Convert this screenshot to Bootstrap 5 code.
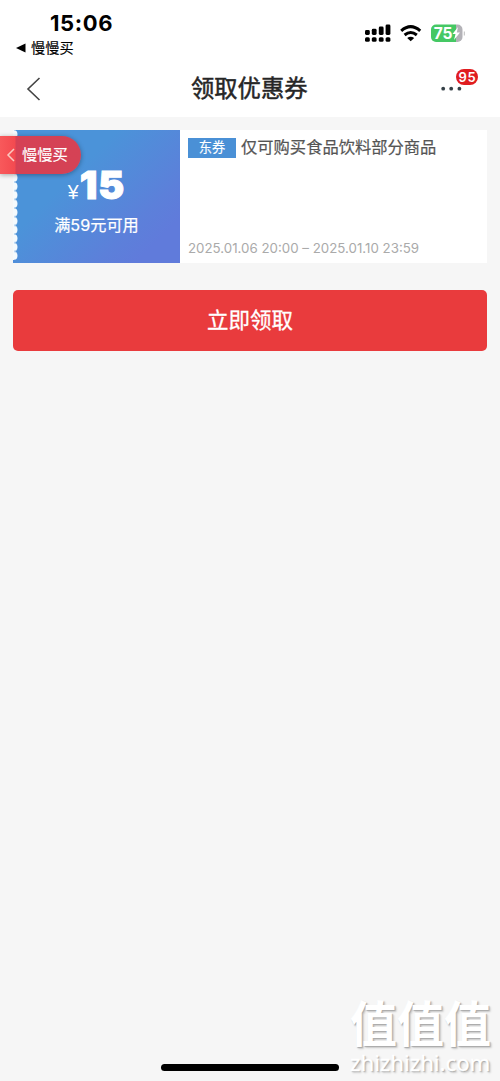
<!DOCTYPE html>
<html lang="zh-CN">
<head>
<meta charset="utf-8">
<meta name="viewport" content="width=device-width, initial-scale=1">
<title>领取优惠券</title>
<link href="https://cdn.jsdelivr.net/npm/bootstrap@5.3.0/dist/css/bootstrap.min.css" rel="stylesheet">
<style>
body{background:#f6f6f6;font-family:Inter,"Noto Sans CJK SC",sans-serif;line-height:1;color:#000;overflow:hidden}
.screen{height:1081px}
.top-area{height:117px}
.status-bar{height:60px;padding:13px 35px 0 16px}
.clock{font-size:22px;font-weight:700;line-height:21px;margin-left:34px;letter-spacing:.6px}
.back-app{font-size:14.2px;line-height:18px;margin-top:5px;gap:5px;-webkit-text-stroke:.15px}
.status-icons{height:20px;margin-top:10px}
.title-bar{height:57px;padding:0 35px 0 26px}
.page-title{font-size:23.3px;line-height:30px;font-weight:400;-webkit-text-stroke:.5px;color:#262626;left:191px;top:14px;white-space:nowrap}
.more{width:24px;height:24px;margin-top:6px}
.count{left:15px;top:-11px;width:22px;height:16px;background:#e01d20;font-size:13px;line-height:16px;font-weight:600;letter-spacing:.8px;border-radius:8px;padding-left:1px}
.page-body{padding:13px 13px 0}
.coupon{height:133px;background:#fff}
.coupon-value{width:167px;background:linear-gradient(135deg,#4b93d9 35%,#5c80da 72%,#607bdb 85%);padding-top:35px}
.scallop{left:0;top:0;width:5px;height:133px}
.currency{font-family:"Liberation Sans",sans-serif;font-size:19.5px;margin-right:1px}
.amount{font-size:39px;font-weight:900;line-height:39px;letter-spacing:1px;-webkit-text-stroke:1px}
.condition{font-size:16.2px;line-height:20px;margin-top:11px;-webkit-text-stroke:.2px;white-space:nowrap}
.coupon-info{padding:6px 8px 5px}
.kind{width:48px;height:20px;background:#4a90d6;font-size:13.2px;-webkit-text-stroke:.15px}
.coupon-name{font-size:16.3px;line-height:23px;color:#555;-webkit-text-stroke:.2px;white-space:nowrap;margin-left:1px}
.valid-date{font-size:13.3px;line-height:20px;color:#aaa;white-space:nowrap}
.claim,.claim:hover{height:61px;margin-top:27px;background:#e93b3d;color:#fff;border:0;border-radius:5px;font-size:21.5px;line-height:30px;padding:0 0 2px;-webkit-text-stroke:.3px}
.return-tag{left:0;top:136px;width:81px;height:38px;border-radius:0 19px 19px 0;background:linear-gradient(90deg,#f8595b,#f34a50 15px,#d54155 16px,#d54255);box-shadow:0 1px 5px #0005;font-size:15.3px;padding-left:6px;gap:6px;-webkit-text-stroke:.15px;white-space:nowrap}
.home-line{left:161px;top:1064px;width:178px;height:7px;border-radius:4px;background:#000}
.watermark{left:350px;top:998px;width:143px;color:#fff;text-shadow:1px 1px 1px #aaa,2px 2px 2px #ccc}
.wm-name{font:700 47px/46px "Noto Sans CJK SC",sans-serif;white-space:nowrap;transform:scaleY(1.04)}
.wm-site{font:400 22.2px/24px "Noto Sans",sans-serif;margin-top:7px;white-space:nowrap;-webkit-text-stroke:.3px}
</style>
</head>
<body>
<main class="screen position-relative">
  <header class="top-area bg-white">
    <div class="status-bar d-flex justify-content-between">
      <div>
        <div class="clock">15:06</div>
        <div class="back-app d-flex align-items-center"><svg width="10" height="10" viewBox="0 0 10 10"><path d="M0 5 9.5.5v9z"/></svg><span>慢慢买</span></div>
      </div>
      <svg class="status-icons" width="101" height="20" viewBox="0 0 101 20">
        <g><rect x="1" y="7" width="4.8" height="5" rx="1.4"/><rect x="7.8" y="5.8" width="4.8" height="6.2" rx="1.4"/><rect x="14.8" y="3.6" width="4.8" height="8.4" rx="1.4"/><rect x="21.6" y="1.5" width="4.8" height="10.5" rx="1.4"/><rect x="1" y="14.2" width="4.8" height="4.6" rx="1.5"/><rect x="7.8" y="14.2" width="4.8" height="4.6" rx="1.5"/><rect x="14.8" y="14.2" width="4.8" height="4.6" rx="1.5"/><rect x="21.6" y="14.2" width="4.8" height="4.6" rx="1.5"/></g>
        <g fill="none" stroke="#000" stroke-width="3"><path d="M37.2 7.8q9.5-8.4 19 0M40.6 12q6.1-5 12.2 0"/></g><path d="M43.2 15q3.5-2.6 7 0l-3.5 3.3z"/>
        <clipPath id="cell"><rect x="67" y="1.5" width="31.5" height="17.5" rx="5"/></clipPath>
        <g clip-path="url(#cell)"><path fill="#45c864" d="M67 1h25v19H67z"/><path fill="#b3b2b7" d="M92 1h7v19h-7z"/></g>
        <path d="M100.3 8.5v4" stroke="#bbb" stroke-width="1"/>
        <text x="69.8" y="15.8" font-size="15.5" font-weight="700" fill="#fff" textLength="18.5">75</text><path d="m94 4-5.5 7h3l-1.5 6 6-7.5h-3.2z" fill="#fff"/>
      </svg>
    </div>
    <div class="title-bar d-flex align-items-center justify-content-between position-relative">
      <svg width="16" height="26" viewBox="0 0 16 26"><path d="M13.5 2 2 13l11.5 11" fill="none" stroke="#444" stroke-width="1.6"/></svg>
      <h1 class="page-title position-absolute">领取优惠券</h1>
      <div class="more position-relative"><svg width="24" height="24" viewBox="0 0 24 24" fill="#354047"><circle cx="2.2" cy="8.7" r="1.9"/><circle cx="10.2" cy="8.7" r="1.9"/><circle cx="18.4" cy="8.7" r="1.9"/></svg><span class="count text-white position-absolute d-flex align-items-center justify-content-center">95</span></div>
    </div>
  </header>
  <section class="page-body">
    <article class="coupon d-flex">
      <div class="coupon-value text-white text-center position-relative flex-shrink-0">
        <svg class="scallop position-absolute" viewBox="0 0 5 133"><defs><pattern id="teeth" width="5" height="8.67" patternUnits="userSpaceOnUse"><path d="M0 0h1.2a3.2 3.4 0 0 1 0 8.67H0z" fill="#f5fafd" transform="translate(0 .2) scale(.85 .95)"/><path d="M0 0h1v8.67H0z" fill="#f5fafd"/></pattern></defs><path fill="url(#teeth)" d="M0 0h5v130H0z"/></svg>
        <div class="d-flex align-items-baseline justify-content-center"><span class="currency">¥</span><span class="amount">15</span></div>
        <div class="condition">满59元可用</div>
      </div>
      <div class="coupon-info d-flex flex-column justify-content-between">
        <div class="d-flex align-items-center"><span class="kind text-white d-flex align-items-center justify-content-center me-1">东券</span><span class="coupon-name">仅可购买食品饮料部分商品</span></div>
        <div class="valid-date">2025.01.06 20:00 – 2025.01.10 23:59</div>
      </div>
    </article>
    <button class="claim btn w-100" type="button">立即领取</button>
  </section>
  <div class="return-tag text-white position-absolute d-flex align-items-center"><svg width="10" height="14" viewBox="0 0 10 14"><path d="M8 1 2 7l6 6" fill="none" stroke="#fbc9c0" stroke-width="1.5"/></svg><span>慢慢买</span></div>
  <div class="home-line position-absolute"></div>
  <div class="watermark position-absolute"><div class="wm-name">值值值</div><div class="wm-site">zhizhizhi.com</div></div>
</main>
<script src="https://cdn.jsdelivr.net/npm/bootstrap@5.3.0/dist/js/bootstrap.bundle.min.js"></script>
</body>
</html>
